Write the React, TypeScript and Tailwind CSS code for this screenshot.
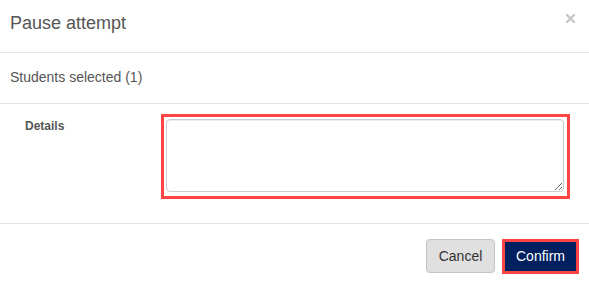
import React from "react";

export default function App() {
  return (
    <div
      className="w-[589px] h-[283px] bg-white overflow-hidden"
      style={{ fontFamily: '"Liberation Sans", Arial, sans-serif' }}
    >
      {/* Header */}
      <div className="h-[53px] border-b border-[#e5e5e5] flex items-start justify-between pl-[10px] pr-[14px] pt-[13px]">
        <h4 className="text-[18px] leading-[20px] text-[#555]">Pause attempt</h4>
        <svg width="9" height="9" viewBox="0 0 9 9" className="mt-[1px]" aria-label="close">
          <path d="M1 1 L8 8 M8 1 L1 8" stroke="#c8c8c8" strokeWidth="2.4" strokeLinecap="square" />
        </svg>
      </div>

      {/* Students selected */}
      <div className="h-[51px] border-b border-[#e5e5e5] pl-[10px] pt-[16px]">
        <p className="text-[14px] leading-[16px] text-[#555]">Students selected (1)</p>
      </div>

      {/* Body */}
      <div className="h-[120px] border-b border-[#e5e5e5] flex items-start pt-[10px]">
        <div className="w-[161px] pl-[25px] pt-[5px]">
          <label className="block text-[12px] leading-[14px] font-bold text-[#555]">Details</label>
        </div>
        <div className="w-[409px] h-[85px] border-[3px] border-[#ff4444] pt-[2px] pl-[2px] pr-[3px] pb-[4px]">
          <textarea className="block w-full h-full border border-[#ccc] rounded-[4px] shadow-[inset_0_1px_1px_rgba(0,0,0,0.075)] bg-white outline-none" />
        </div>
      </div>

      {/* Footer */}
      <div className="flex justify-end items-start pt-[15px] pr-[10px] gap-[7px]">
        <button className="h-[34px] w-[69px] rounded-[4px] border border-[#c4c4c4] bg-[#e0e0e0] text-[14px] text-[#333]">
          Cancel
        </button>
        <button className="h-[35px] w-[77px] border-[3px] border-[#ff4444] bg-[#002060] text-[14px] text-white">
          Confirm
        </button>
      </div>
    </div>
  );
}
